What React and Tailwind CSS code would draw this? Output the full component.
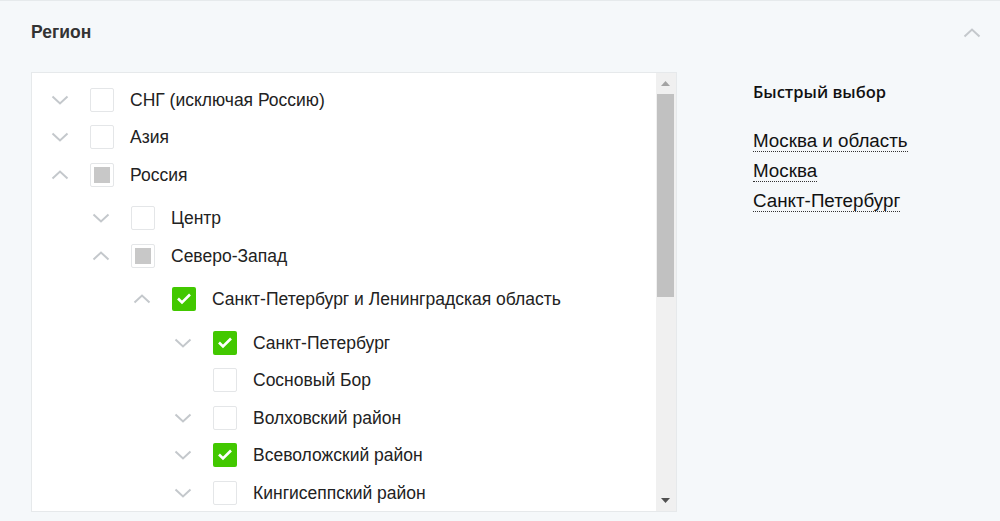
import React from "react";

const rows = [
  { level: 0, label: "СНГ (исключая Россию)", chev: "down", state: "off" },
  { level: 0, label: "Азия", chev: "down", state: "off" },
  { level: 0, label: "Россия", chev: "up", state: "partial", open: true },
  { level: 1, label: "Центр", chev: "down", state: "off", first: true },
  { level: 1, label: "Северо-Запад", chev: "up", state: "partial", open: true },
  { level: 2, label: "Санкт-Петербург и Ленинградская область", chev: "up", state: "on", first: true },
  { level: 3, label: "Санкт-Петербург", chev: "down", state: "on", first: true },
  { level: 3, label: "Сосновый Бор", chev: null, state: "off" },
  { level: 3, label: "Волховский район", chev: "down", state: "off" },
  { level: 3, label: "Всеволожский район", chev: "down", state: "on" },
  { level: 3, label: "Кингисеппский район", chev: "down", state: "off" },
];

function Chevron({ dir, className = "" }) {
  return (
    <svg width="18" height="10" viewBox="0 0 18 10" className={className}>
      {dir === "down" ? (
        <polyline points="1.5,1.5 9,8.5 16.5,1.5" fill="none" stroke="#c4c8cc" strokeWidth="2" />
      ) : (
        <polyline points="1.5,8.5 9,1.5 16.5,8.5" fill="none" stroke="#c4c8cc" strokeWidth="2" />
      )}
    </svg>
  );
}

function Box({ state }) {
  if (state === "on") {
    return (
      <div className="w-6 h-6 rounded-[2px] bg-[#42c800] flex items-center justify-center">
        <svg width="16" height="12" viewBox="0 0 16 12">
          <polyline points="2,5.5 6,9.5 14,1.5" fill="none" stroke="#ffffff" strokeWidth="2.6" />
        </svg>
      </div>
    );
  }
  return (
    <div className="w-6 h-6 rounded-[2px] border border-[#e4e6e8] bg-white flex items-center justify-center">
      {state === "partial" && <div className="w-[16px] h-[16px] bg-[#c8c8c8]" />}
    </div>
  );
}

function Row({ r }) {
  const pads = ["pl-[16px]", "pl-[57px]", "pl-[98px]", "pl-[139px]"];
  return (
    <div className={`flex items-center h-[37.5px] ${pads[r.level]} ${r.first ? "mt-[6px]" : ""}`}>
      <div className="w-6 flex items-center justify-center">
        {r.chev && <Chevron dir={r.chev} />}
      </div>
      <div className="ml-[18px]">
        <Box state={r.state} />
      </div>
      <span className="ml-4 text-[17.5px] text-[#222] whitespace-nowrap">{r.label}</span>
    </div>
  );
}

export default function App() {
  return (
    <div
      className="w-[1000px] h-[521px] bg-[#f5f8fa] border-t border-[#e6eaec] overflow-hidden"
      style={{ fontFamily: '"Liberation Sans", Arial, sans-serif' }}
    >
      <div className="h-[63px] pl-[31px] pr-[19px] flex items-center justify-between">
        <span className="text-[17.5px] font-bold text-[#333]">Регион</span>
        <Chevron dir="up" />
      </div>
      <div className="flex items-start pl-[31px] mt-[8px]">
        <div className="w-[646px] h-[440px] bg-white border border-[#e6e9eb] flex overflow-hidden">
          <div className="flex-1 pt-[8px] overflow-hidden">
            {rows.map((r, i) => (
              <Row key={i} r={r} />
            ))}
          </div>
          <div className="w-[20px] h-full bg-[#f0f0f0] flex flex-col items-center pl-[1px] pr-[2px]">
            <div className="h-[21px] w-full flex items-center justify-center">
              <svg width="9" height="5" viewBox="0 0 9 5">
                <polygon points="0,5 4.5,0 9,5" fill="#a3a3a3" />
              </svg>
            </div>
            <div className="w-full h-[203px] bg-[#c1c1c1]" />
            <div className="flex-1" />
            <div className="h-[21px] w-full flex items-center justify-center">
              <svg width="9" height="5" viewBox="0 0 9 5">
                <polygon points="0,0 4.5,5 9,0" fill="#505050" />
              </svg>
            </div>
          </div>
        </div>
        <div className="ml-[76px] pt-[8px] flex flex-col items-start">
          <span
            className="text-[16.5px] font-semibold text-[#111]"
            style={{ fontFamily: '"Open Sans", "Liberation Sans", sans-serif' }}
          >
            Быстрый выбор
          </span>
          <div className="mt-[25px] flex flex-col items-start gap-[8px]">
            {["Москва и область", "Москва", "Санкт-Петербург"].map((t) => (
              <span
                key={t}
                className="text-[18.8px] text-[#111] leading-[21px] border-b border-dotted border-[#333] cursor-pointer"
              >
                {t}
              </span>
            ))}
          </div>
        </div>
      </div>
    </div>
  );
}
